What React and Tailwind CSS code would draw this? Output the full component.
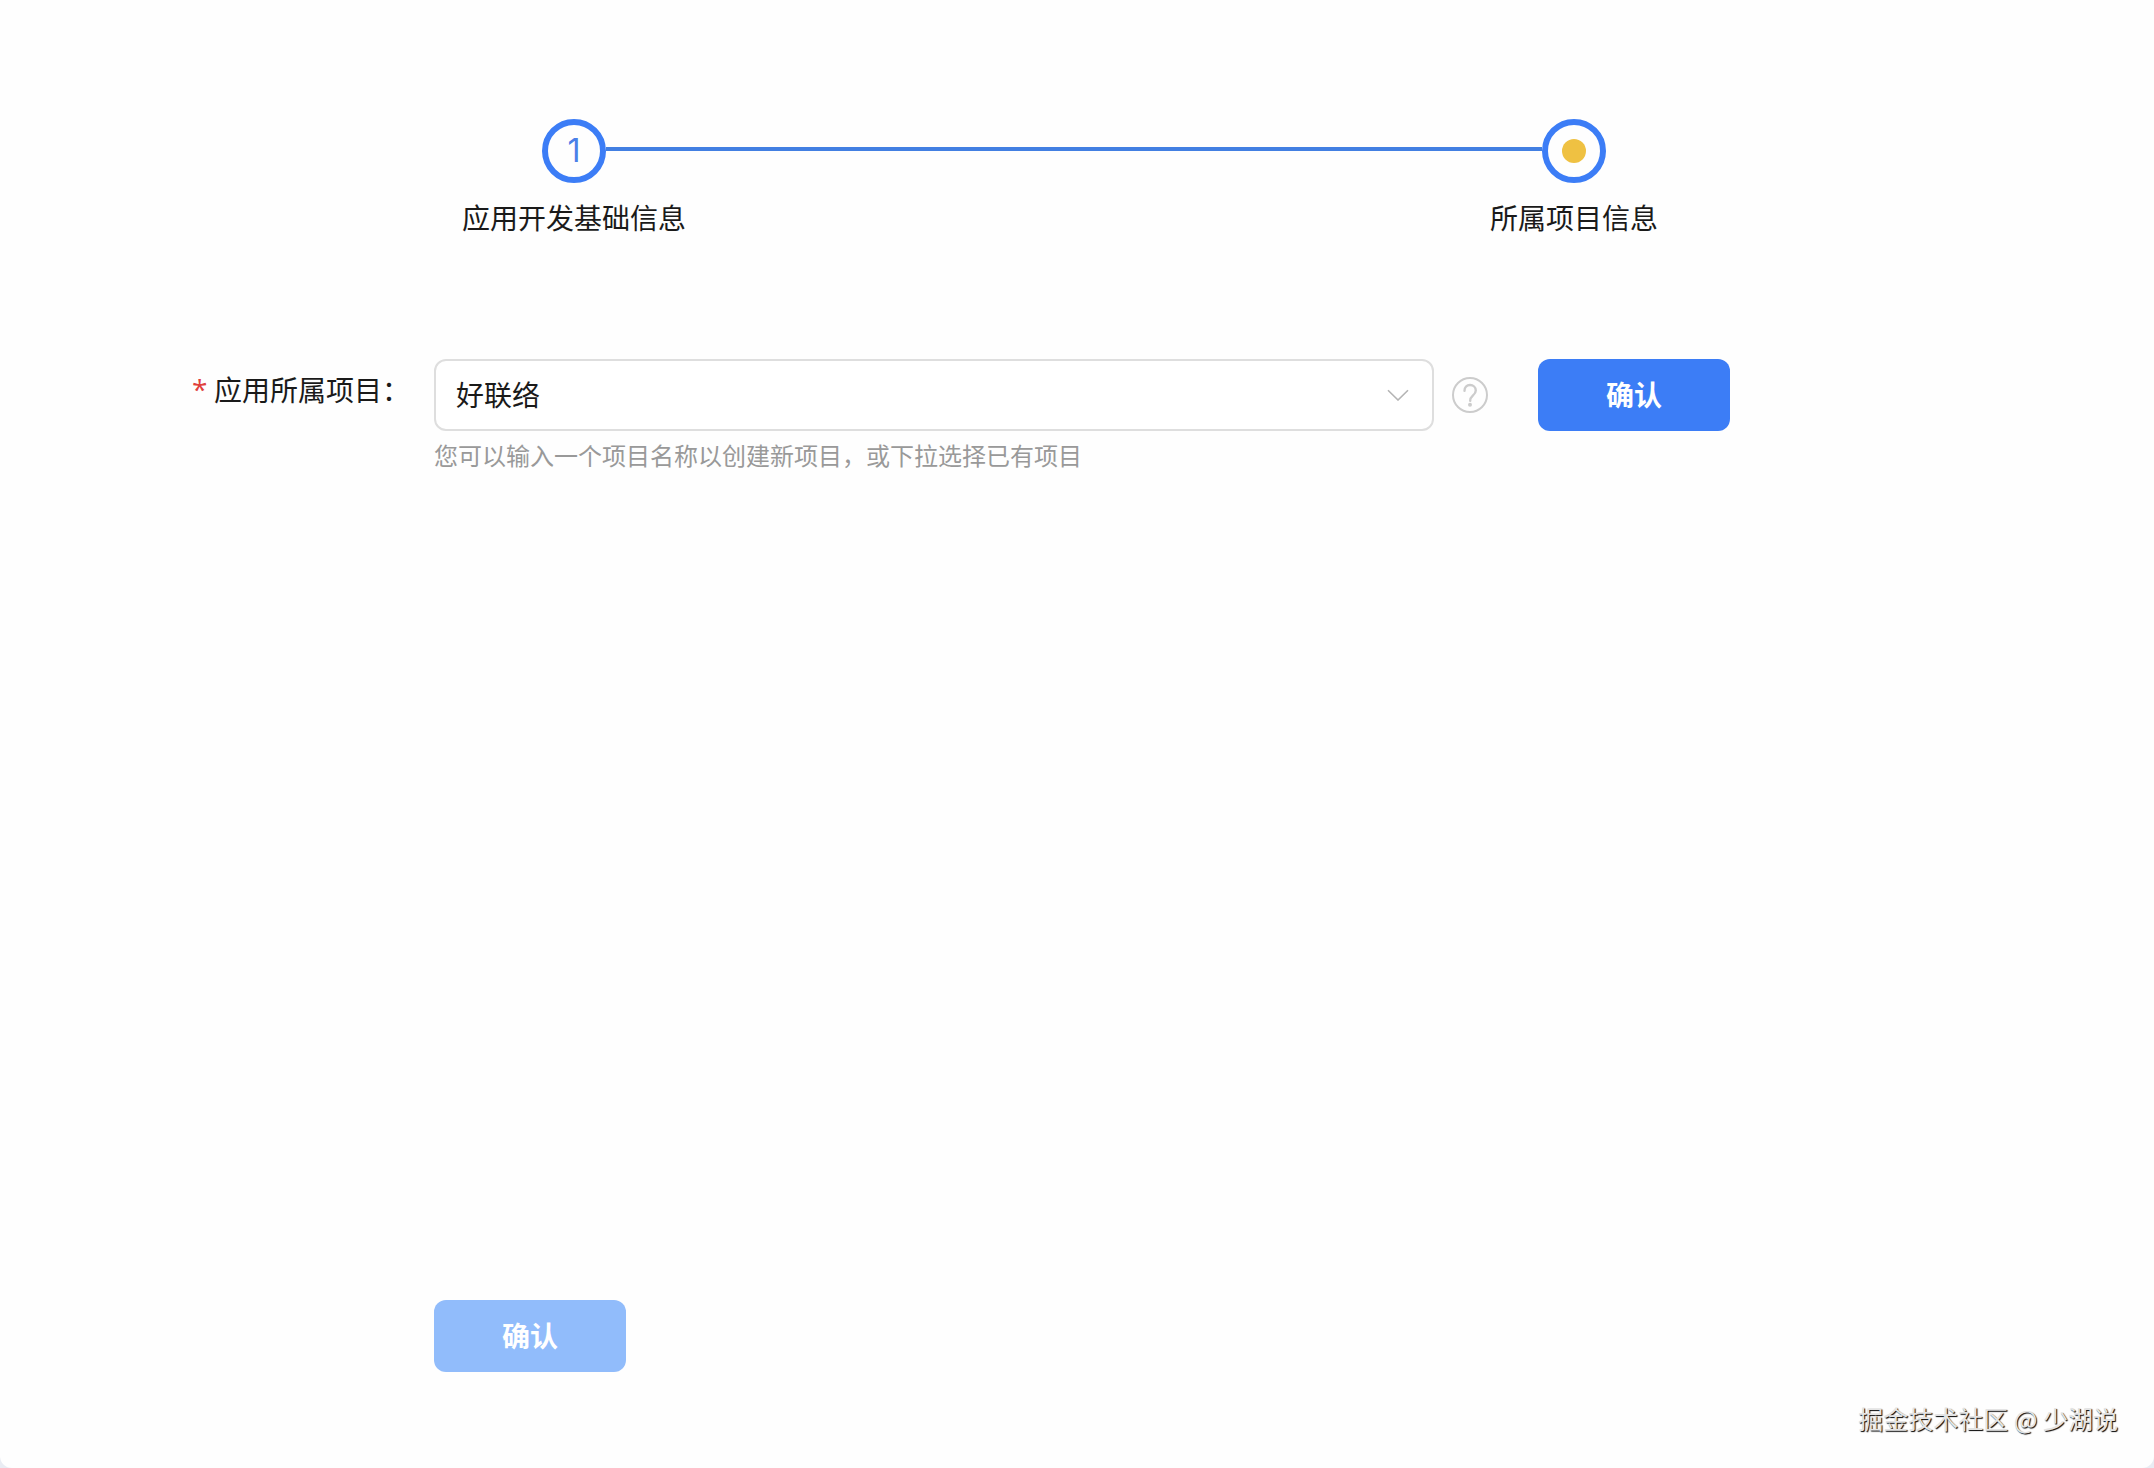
import React from "react";

function Step({ label, children }) {
  return (
    <li className="flex w-16 shrink-0 flex-col items-center gap-3.5">
      <span className="flex size-16 items-center justify-center rounded-full border-6 border-[#3c7df6] font-['Inter','Noto_Sans_CJK_SC',sans-serif] text-[32px] leading-none text-[#4a80e8]">
        {children}
      </span>
      <span className="text-[28px] leading-10 whitespace-nowrap">{label}</span>
    </li>
  );
}

function ConfirmButton({ disabled = false, type = "button" }) {
  return (
    <button
      type={type}
      disabled={disabled}
      className="h-18 w-48 shrink-0 rounded-xl bg-[#3c7df6] pb-0.5 text-[28px] leading-10 font-bold text-white disabled:bg-[#91bcfb]"
    >
      确认
    </button>
  );
}

function HelpButton() {
  return (
    <button type="button" aria-label="帮助" className="size-9 shrink-0 text-[#cccccc]">
      <svg viewBox="0 0 36 36" className="size-9" fill="none" stroke="currentColor" strokeWidth="2" strokeLinecap="round">
        <circle cx="18" cy="18" r="17" />
        <path d="M12.5 13.8C12.5 10.4 14.8 8 18 8s5.8 2.3 5.8 5.5c0 2.4-1.3 3.6-3 5.1-1.8 1.6-2.6 2.7-2.6 5.1" strokeWidth="2.4" />
        <circle cx="18" cy="27.8" r="2" fill="currentColor" stroke="none" />
      </svg>
    </button>
  );
}

export default function App() {
  return (
    <div className="bg-[#e9ecf3]">
      <main className="flex min-h-screen flex-col rounded-b-xl bg-[#fefefe] pt-[119px] font-['Noto_Sans_CJK_SC',sans-serif] text-[#1a1a1a]">
        <ol className="mr-[548px] ml-[542px] flex">
          <Step label="应用开发基础信息">1</Step>
          <li aria-hidden="true" className="mt-7 h-1 flex-1 bg-[#427fe2]" />
          <Step label="所属项目信息">
            <span className="size-6 rounded-full bg-[#efc142]" />
          </Step>
        </ol>

        <form className="mt-[122px] flex flex-1 flex-col" onSubmit={(e) => e.preventDefault()}>
          <div className="flex pr-[424px]">
            <label htmlFor="project" className="flex w-[434px] shrink-0 pt-2.5 pl-48 text-[28px] leading-10">
              <span className="w-[22px] font-['Open_Sans',sans-serif] text-[#e0403c]">*</span>
              <span className="whitespace-nowrap">应用所属项目：</span>
            </label>
            <div className="min-w-0 flex-1">
              <div className="flex items-center">
                <div className="relative min-w-0 flex-1">
                  <select
                    id="project"
                    defaultValue="好联络"
                    aria-describedby="project-hint"
                    className="block h-18 w-full appearance-none rounded-xl border-2 border-[#dedede] bg-white pr-16 pb-0.5 pl-5 text-[28px] leading-10"
                  >
                    <option>好联络</option>
                  </select>
                  <svg
                    viewBox="0 0 22 12"
                    className="pointer-events-none absolute top-[30px] right-[25px] h-3 w-[22px]"
                    fill="none"
                    stroke="#b4b4b4"
                    strokeWidth="1.6"
                  >
                    <path d="M1 1.2l10 9.8L21 1.2" />
                  </svg>
                </div>
                <div className="ml-[18px] flex items-center gap-[50px]">
                  <HelpButton />
                  <ConfirmButton />
                </div>
              </div>
              <p id="project-hint" className="mt-1.5 text-2xl leading-9 text-[#999999]">
                您可以输入一个项目名称以创建新项目，或下拉选择已有项目
              </p>
            </div>
          </div>
          <div className="mt-auto pl-[434px]">
            <ConfirmButton type="submit" disabled />
          </div>
        </form>

        <footer className="mt-7 pr-9 pb-8 text-right text-[25px] leading-9 text-[#e4e4e4] [text-shadow:1px_1px_1px_#000]">
          掘金技术社区 @ 少湖说
        </footer>
      </main>
    </div>
  );
}
